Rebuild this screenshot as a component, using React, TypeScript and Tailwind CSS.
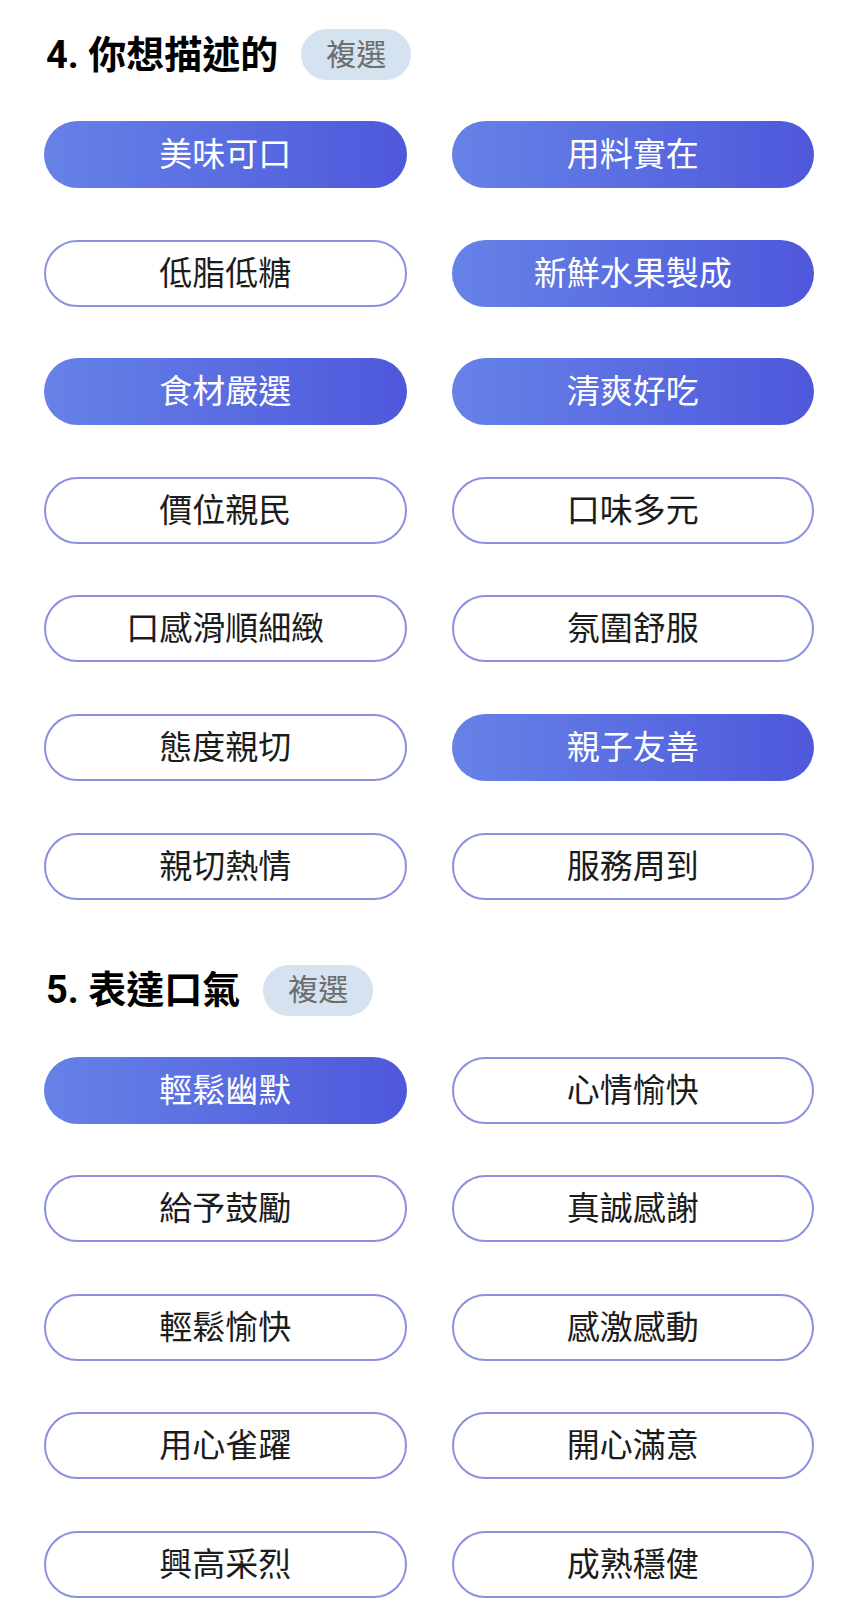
const font = { fontFamily: 'Roboto, "Noto Sans CJK TC", "Noto Sans", sans-serif' };

interface Section {
    num: number;
    title: string;
    options: { label: string; selected: boolean }[];
}

const sections: Section[] = [
    {
        num: 4,
        title: "你想描述的",
        options: [
            { label: "美味可口", selected: true },
            { label: "用料實在", selected: true },
            { label: "低脂低糖", selected: false },
            { label: "新鮮水果製成", selected: true },
            { label: "食材嚴選", selected: true },
            { label: "清爽好吃", selected: true },
            { label: "價位親民", selected: false },
            { label: "口味多元", selected: false },
            { label: "口感滑順細緻", selected: false },
            { label: "氛圍舒服", selected: false },
            { label: "態度親切", selected: false },
            { label: "親子友善", selected: true },
            { label: "親切熱情", selected: false },
            { label: "服務周到", selected: false },
        ],
    },
    {
        num: 5,
        title: "表達口氣",
        options: [
            { label: "輕鬆幽默", selected: true },
            { label: "心情愉快", selected: false },
            { label: "給予鼓勵", selected: false },
            { label: "真誠感謝", selected: false },
            { label: "輕鬆愉快", selected: false },
            { label: "感激感動", selected: false },
            { label: "用心雀躍", selected: false },
            { label: "開心滿意", selected: false },
            { label: "興高采烈", selected: false },
            { label: "成熟穩健", selected: false },
        ],
    },
];

function OptionButton({ label, selected }: { label: string; selected: boolean }) {
    return (
        <button
            className={
                selected
                    ? "h-[67px] rounded-full bg-gradient-to-r from-[#6682e7] to-[#4f57db] text-white text-[33px] leading-none flex items-center justify-center"
                    : "h-[67px] rounded-full border-2 border-[#8b90e0] bg-white text-[#1c1c1c] text-[33px] leading-none flex items-center justify-center"
            }
        >
            {label}
        </button>
    );
}

export default function App() {
    return (
        <div className="bg-white min-h-[1619px] px-[44px] pt-[29px]" style={font}>
            {sections.map((section, i) => (
                <div key={section.num} className={i > 0 ? "mt-[65px]" : ""}>
                    {/* Header */}
                    <div className="flex items-center gap-[23px] h-[51px] pl-[2px]">
                        <h2 className="text-[38px] font-bold text-black leading-none">
                            {section.num}. {section.title}
                        </h2>
                        <span className="h-[51px] px-[25px] rounded-full bg-[#d5e3f1] text-[#6d6d6d] text-[30px] leading-none flex items-center">
                            複選
                        </span>
                    </div>

                    {/* Options */}
                    <div className="mt-[41px] grid grid-cols-2 gap-x-[45px] gap-y-[51.6px]">
                        {section.options.map((opt) => (
                            <OptionButton key={opt.label} label={opt.label} selected={opt.selected} />
                        ))}
                    </div>
                </div>
            ))}
        </div>
    );
}
